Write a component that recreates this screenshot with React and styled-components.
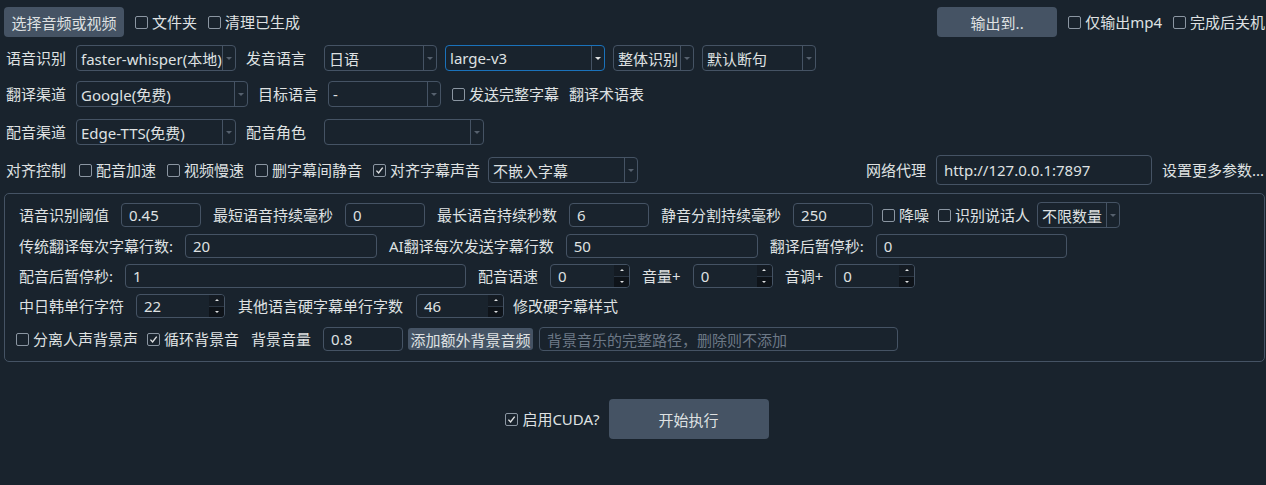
import React from 'react';
import styled, { createGlobalStyle } from 'styled-components';

const GlobalStyle = createGlobalStyle`
  html, body {
    margin: 0;
    padding: 0;
    background: #19232d;
  }
  body {
    font-family: "Noto Sans", "Noto Sans CJK SC", sans-serif;
    font-size: 15px;
    color: #dfe1e2;
  }
`;

const Window = styled.div`
  width: 1266px;
  height: 485px;
  overflow: hidden;
  background: #19232d;
  display: flex;
  flex-direction: column;
`;

const Bar = styled.div`
  display: flex;
  align-items: center;
  justify-content: ${p => (p.$center ? 'center' : 'flex-start')};
  height: ${p => p.$h || 26}px;
  margin-top: ${p => p.$mt || 0}px;
  padding: 0 ${p => p.$pr || 0}px 0 ${p => p.$pl || 0}px;
  flex-shrink: 0;
`;

const Spacer = styled.div`
  flex: 1;
`;

const Text = styled.span`
  margin-left: ${p => p.$ml || 0}px;
  white-space: nowrap;
  flex-shrink: 0;
  line-height: 20px;
`;

const PushButton = styled.div`
  width: ${p => p.$w}px;
  height: ${p => p.$h || 30}px;
  margin-left: ${p => p.$ml || 0}px;
  background: #455364;
  border-radius: ${p => (p.$small ? 3 : 4)}px;
  display: flex;
  align-items: center;
  justify-content: center;
  white-space: nowrap;
  flex-shrink: 0;
  color: #dfe1e2;
`;

const CheckItem = styled.label`
  display: flex;
  align-items: center;
  gap: 4px;
  margin-left: ${p => p.$ml || 0}px;
  flex-shrink: 0;
  white-space: nowrap;
  line-height: 20px;
`;

const Box = styled.span`
  width: 13px;
  height: 13px;
  box-sizing: border-box;
  border: 1px solid #8b96a2;
  border-radius: 2px;
  display: inline-flex;
  align-items: center;
  justify-content: center;
  flex-shrink: 0;
`;

const CheckBox = ({ checked, ml, children }) => (
  <CheckItem $ml={ml}>
    <Box>
      {checked && (
        <svg width="9" height="9" viewBox="0 0 9 9">
          <path d="M1.4 4.6 L3.6 7 L7.7 1.6" stroke="#dfe1e2" strokeWidth="1.4" fill="none" />
        </svg>
      )}
    </Box>
    <span>{children}</span>
  </CheckItem>
);

const ComboFrame = styled.div`
  display: flex;
  align-items: stretch;
  width: ${p => p.$w}px;
  height: 26px;
  margin-left: ${p => p.$ml || 0}px;
  box-sizing: border-box;
  border: 1px solid ${p => (p.$focus ? '#1a72bb' : '#455364')};
  border-radius: 4px;
  flex-shrink: 0;
  overflow: hidden;
`;

const ComboText = styled.div`
  flex: 1;
  min-width: 0;
  padding-left: 4px;
  display: flex;
  align-items: center;
  overflow: hidden;
  white-space: nowrap;
`;

const ComboArrow = styled.div`
  width: 12px;
  border-left: 1px solid #455364;
  display: flex;
  align-items: center;
  justify-content: center;

  &::after {
    content: "";
    border-left: 3px solid transparent;
    border-right: 3px solid transparent;
    border-top: 3px solid ${p => (p.$focus ? '#dfe1e2' : '#56616e')};
  }
`;

const Combo = ({ w, ml, focus, children }) => (
  <ComboFrame $w={w} $ml={ml} $focus={focus}>
    <ComboText>{children}</ComboText>
    <ComboArrow $focus={focus} />
  </ComboFrame>
);

const LineEdit = styled.div`
  width: ${p => p.$w}px;
  height: ${p => p.$h || 24}px;
  margin-left: ${p => p.$ml || 0}px;
  box-sizing: border-box;
  border: 1px solid #455364;
  border-radius: 4px;
  padding-left: 7px;
  display: flex;
  align-items: center;
  white-space: nowrap;
  overflow: hidden;
  flex-shrink: 0;
  color: ${p => (p.$placeholder ? '#6c7886' : '#dfe1e2')};
`;

const SpinFrame = styled.div`
  width: ${p => p.$w}px;
  height: 24px;
  margin-left: ${p => p.$ml || 0}px;
  box-sizing: border-box;
  border: 1px solid #455364;
  border-radius: 4px;
  display: flex;
  flex-shrink: 0;
  overflow: hidden;
`;

const SpinValue = styled.div`
  flex: 1;
  padding-left: 7px;
  display: flex;
  align-items: center;
`;

const SpinButtons = styled.div`
  width: 15px;
  display: flex;
  flex-direction: column;
`;

const SpinStep = styled.div`
  flex: 1;
  background: ${p => (p.$down ? '#0e1319' : '#141b23')};
  border-top: ${p => (p.$down ? '1px solid #2b3643' : 'none')};
  display: flex;
  align-items: center;
  justify-content: center;

  &::after {
    content: "";
    border-left: 2px solid transparent;
    border-right: 2px solid transparent;
    ${p => (p.$down ? 'border-top' : 'border-bottom')}: 2px solid #dfe1e2;
  }
`;

const SpinBox = ({ w, ml, children }) => (
  <SpinFrame $w={w} $ml={ml}>
    <SpinValue>{children}</SpinValue>
    <SpinButtons>
      <SpinStep />
      <SpinStep $down />
    </SpinButtons>
  </SpinFrame>
);

const GroupPanel = styled.div`
  margin: 8px 1px 0 4px;
  border: 1px solid #455364;
  border-radius: 5px;
  padding: 8px 0 10px 11px;
  display: flex;
  flex-direction: column;
  flex-shrink: 0;
`;

export default function App() {
  return (
    <Window>
      <GlobalStyle />

      <Bar $h={30} $mt={7} $pl={4} $pr={1}>
        <PushButton $w={120}>选择音频或视频</PushButton>
        <CheckBox ml={11}>文件夹</CheckBox>
        <CheckBox ml={11}>清理已生成</CheckBox>
        <Spacer />
        <PushButton $w={120}>输出到..</PushButton>
        <CheckBox ml={11}>仅输出mp4</CheckBox>
        <CheckBox ml={11}>完成后关机</CheckBox>
      </Bar>

      <Bar $mt={8} $pl={6}>
        <Text>语音识别</Text>
        <Combo w={160} ml={10}>faster-whisper(本地)</Combo>
        <Text $ml={10}>发音语言</Text>
        <Combo w={113} ml={18}>日语</Combo>
        <Combo w={160} ml={8} focus>large-v3</Combo>
        <Combo w={81} ml={8}>整体识别</Combo>
        <Combo w={114} ml={8}>默认断句</Combo>
      </Bar>

      <Bar $mt={10} $pl={6}>
        <Text>翻译渠道</Text>
        <Combo w={172} ml={10}>Google(免费)</Combo>
        <Text $ml={10}>目标语言</Text>
        <Combo w={113} ml={10}>-</Combo>
        <CheckBox ml={11}>发送完整字幕</CheckBox>
        <Text $ml={10}>翻译术语表</Text>
      </Bar>

      <Bar $mt={12} $pl={6}>
        <Text>配音渠道</Text>
        <Combo w={160} ml={10}>Edge-TTS(免费)</Combo>
        <Text $ml={10}>配音角色</Text>
        <Combo w={160} ml={18}></Combo>
      </Bar>

      <Bar $h={30} $mt={10} $pl={6} $pr={2}>
        <Text>对齐控制</Text>
        <CheckBox ml={13}>配音加速</CheckBox>
        <CheckBox ml={11}>视频慢速</CheckBox>
        <CheckBox ml={11}>删字幕间静音</CheckBox>
        <CheckBox ml={11} checked>对齐字幕声音</CheckBox>
        <Combo w={150} ml={8}>不嵌入字幕</Combo>
        <Spacer />
        <Text>网络代理</Text>
        <LineEdit $w={216} $h={30} $ml={10}>http://127.0.0.1:7897</LineEdit>
        <Text $ml={10}>设置更多参数...</Text>
      </Bar>

      <GroupPanel>
        <Bar $pl={3}>
          <Text>语音识别阈值</Text>
          <LineEdit $w={80} $ml={12}>0.45</LineEdit>
          <Text $ml={12}>最短语音持续毫秒</Text>
          <LineEdit $w={80} $ml={12}>0</LineEdit>
          <Text $ml={12}>最长语音持续秒数</Text>
          <LineEdit $w={80} $ml={12}>6</LineEdit>
          <Text $ml={12}>静音分割持续毫秒</Text>
          <LineEdit $w={80} $ml={12}>250</LineEdit>
          <CheckBox ml={9}>降噪</CheckBox>
          <CheckBox ml={9}>识别说话人</CheckBox>
          <Combo w={83} ml={7}>不限数量</Combo>
        </Bar>

        <Bar $h={24} $mt={6} $pl={3}>
          <Text>传统翻译每次字幕行数:</Text>
          <LineEdit $w={192} $ml={12}>20</LineEdit>
          <Text $ml={12}>AI翻译每次发送字幕行数</Text>
          <LineEdit $w={192} $ml={12}>50</LineEdit>
          <Text $ml={12}>翻译后暂停秒:</Text>
          <LineEdit $w={191} $ml={12}>0</LineEdit>
        </Bar>

        <Bar $h={24} $mt={6} $pl={3}>
          <Text>配音后暂停秒:</Text>
          <LineEdit $w={341} $ml={12}>1</LineEdit>
          <Text $ml={12}>配音语速</Text>
          <SpinBox w={80} ml={12}>0</SpinBox>
          <Text $ml={12}>音量+</Text>
          <SpinBox w={80} ml={12}>0</SpinBox>
          <Text $ml={12}>音调+</Text>
          <SpinBox w={80} ml={12}>0</SpinBox>
        </Bar>

        <Bar $h={24} $mt={6} $pl={3}>
          <Text>中日韩单行字符</Text>
          <SpinBox w={89} ml={12}>22</SpinBox>
          <Text $ml={13}>其他语言硬字幕单行字数</Text>
          <SpinBox w={88} ml={13}>46</SpinBox>
          <Text $ml={9}>修改硬字幕样式</Text>
        </Bar>

        <Bar $h={24} $mt={9}>
          <CheckBox>分离人声背景声</CheckBox>
          <CheckBox ml={9} checked>循环背景音</CheckBox>
          <Text $ml={12}>背景音量</Text>
          <LineEdit $w={80} $ml={12}>0.8</LineEdit>
          <PushButton $w={125} $h={22} $ml={5} $small>添加额外背景音频</PushButton>
          <LineEdit $w={359} $ml={6} $placeholder>背景音乐的完整路径，删除则不添加</LineEdit>
        </Bar>
      </GroupPanel>

      <Bar $h={40} $mt={37} $pl={8} $center>
        <CheckBox checked>启用CUDA?</CheckBox>
        <PushButton $w={160} $h={40} $ml={9}>开始执行</PushButton>
      </Bar>
    </Window>
  );
}
